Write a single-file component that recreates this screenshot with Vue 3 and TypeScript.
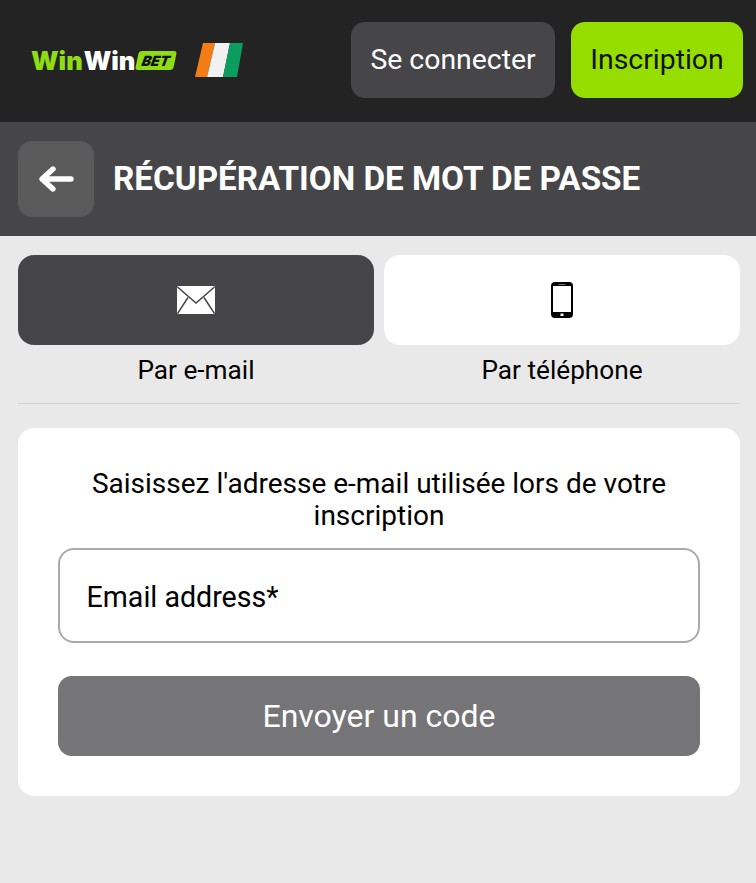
<script setup lang="ts">
const tabs = [
  { key: 'email', label: 'Par e-mail', active: true },
  { key: 'phone', label: 'Par téléphone', active: false },
];
</script>

<template>
  <div class="page">
    <header class="topbar">
      <div class="logo">
        <span class="logo-word green">Win</span><span class="logo-word white">Win</span>
        <span class="logo-bet"><span>BET</span></span>
        <svg class="flag" width="48" height="34" viewBox="0 0 48 34">
          <polygon points="8,0 20,0 12,34 0,34" fill="#f47c14" />
          <polygon points="20,0 35,0 28,34 12,34" fill="#f1f1f1" />
          <polygon points="35,0 48,0 42,34 28,34" fill="#0b9c5f" />
        </svg>
      </div>
      <div class="top-actions">
        <button class="btn-login">Se connecter</button>
        <button class="btn-register">Inscription</button>
      </div>
    </header>

    <div class="titlebar">
      <button class="back" aria-label="Retour">
        <svg width="36" height="28" viewBox="0 0 36 28" fill="none">
          <path d="M33 14H5M15 4 4 14l11 10" stroke="#fff" stroke-width="5.4" stroke-linecap="round" stroke-linejoin="round" />
        </svg>
      </button>
      <h1>RÉCUPÉRATION DE MOT DE PASSE</h1>
    </div>

    <main class="content">
      <div class="tabs">
        <div v-for="t in tabs" :key="t.key" class="tab">
          <div class="tab-box" :class="{ active: t.active }">
            <svg v-if="t.key === 'email'" width="38" height="28" viewBox="0 0 38 28">
              <rect width="38" height="28" rx="1.5" fill="#fff" />
              <path d="M0.5 1 19 17 37.500 1M0.5 27.500 11 11.500M37.500 27.500 27 11.500" fill="none" stroke="#464648" stroke-width="1.5" />
            </svg>
            <svg v-else width="24" height="36" viewBox="0 0 24 36">
              <rect x="1" y="0" width="22" height="36" rx="4" fill="#000" />
              <rect x="3" y="4" width="18" height="26" fill="#fff" />
              <rect x="8.500" y="2" width="7" height="1" fill="#777" />
              <rect x="10.500" y="31.500" width="3" height="2.500" fill="#fff" />
            </svg>
          </div>
          <div class="tab-label">{{ t.label }}</div>
        </div>
      </div>
      <hr class="divider" />
      <section class="card">
        <p class="hint">Saisissez l'adresse e-mail utilisée lors de votre inscription</p>
        <div class="field">Email address*</div>
        <button class="send">Envoyer un code</button>
      </section>
    </main>
  </div>
</template>

<style scoped>
.page {
  min-height: 883px;
  background: #e9e9e9;
  font-family: Roboto, "Liberation Sans", sans-serif;
  color: #000;
}
.topbar {
  height: 122px;
  box-sizing: border-box;
  background: #232323;
  display: flex;
  align-items: center;
  justify-content: space-between;
  padding: 0 13px 2px 31px;
}
.logo {
  display: flex;
  align-items: center;
}
.logo-word {
  font-family: Inter, Roboto, sans-serif;
  font-weight: 900;
  font-size: 25.5px;
  letter-spacing: 0;
  margin-right: 1px;
}
.green { color: #8fdc14; }
.white { color: #fff; }
.logo-bet {
  margin-left: 1px;
  width: 38px;
  height: 19px;
  background: #8fdc14;
  border-radius: 3px;
  transform: skewX(-12deg);
  display: flex;
  align-items: center;
  justify-content: center;
}
.logo-bet span {
  font-family: Inter, Roboto, sans-serif;
  font-weight: 900;
  font-style: italic;
  font-size: 14px;
  color: #111;
}
.flag {
  margin-left: 20px;
}
.top-actions {
  display: flex;
  gap: 16px;
}
.top-actions button {
  height: 76px;
  border: 0;
  border-radius: 14px;
  padding-bottom: 3px;
  font-family: inherit;
  font-size: 28.4px;
}
.btn-login {
  width: 204px;
  background: #464648;
  color: #fff;
}
.btn-register {
  width: 172px;
  background: #96de00;
  color: #111;
}
.titlebar {
  height: 114px;
  box-sizing: border-box;
  background: #464648;
  display: flex;
  align-items: center;
  padding: 0 18px;
  gap: 19px;
}
.back {
  width: 76px;
  height: 76px;
  border: 0;
  border-radius: 14px;
  background: #5a5a5b;
  display: flex;
  align-items: center;
  justify-content: center;
  padding: 0;
}
h1 {
  margin: 0;
  color: #fff;
  font-size: 33.25px;
  font-weight: 700;
  line-height: 40px;
}
.content {
  padding: 19px 16px 0 18px;
}
.tabs {
  display: grid;
  grid-template-columns: 356px 356px;
  gap: 10px;
}
.tab-box {
  height: 90px;
  border-radius: 16px;
  background: #fff;
  display: flex;
  align-items: center;
  justify-content: center;
}
.tab-box.active {
  background: #464648;
}
.tab-label {
  margin-top: 9px;
  text-align: center;
  font-size: 26.2px;
  line-height: 32px;
}
.divider {
  margin: 17px 0 24px;
  border: 0;
  height: 1px;
  background: #d4d4d4;
}
.card {
  width: 722px;
  height: 368px;
  box-sizing: border-box;
  background: #fff;
  border-radius: 16px;
  padding: 40px 40px 0;
}
.hint {
  margin: 0 0 16px;
  text-align: center;
  font-size: 28px;
  line-height: 32px;
}
.field {
  height: 95px;
  box-sizing: border-box;
  border: 2px solid #aaaaac;
  border-radius: 16px;
  padding: 2px 0 0 26.5px;
  display: flex;
  align-items: center;
  font-size: 28.6px;
}
.send {
  display: block;
  width: 100%;
  height: 80px;
  margin-top: 33px;
  border: 0;
  border-radius: 14px;
  background: #757577;
  color: #fff;
  font-family: inherit;
  font-size: 32px;
}
</style>
